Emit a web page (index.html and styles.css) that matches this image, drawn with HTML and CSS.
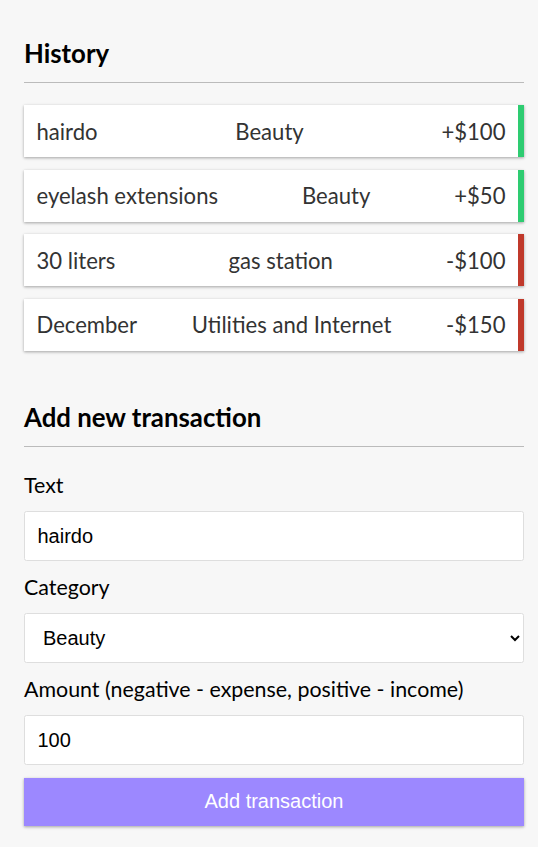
FILE: index.html
```html
<!DOCTYPE html>
<html lang="en">
<head>
<meta charset="UTF-8">
<title>Expense Tracker</title>
<link rel="stylesheet" href="styles.css">
</head>
<body>
<div class="container">
  <h3 class="heading heading-first">History</h3>
  <ul class="list">
    <li class="item plus"><span>hairdo</span><span>Beauty</span><span>+$100</span></li>
    <li class="item plus"><span>eyelash extensions</span><span>Beauty</span><span>+$50</span></li>
    <li class="item minus"><span>30 liters</span><span>gas station</span><span>-$100</span></li>
    <li class="item minus"><span>December</span><span>Utilities and Internet</span><span>-$150</span></li>
  </ul>
  <h3 class="heading">Add new transaction</h3>
  <form class="form">
    <div class="field">
      <label class="label" for="text">Text</label>
      <input class="control" type="text" id="text" value="hairdo">
    </div>
    <div class="field">
      <label class="label" for="category">Category</label>
      <select class="control select" id="category">
        <option selected>Beauty</option>
        <option>gas station</option>
        <option>Utilities and Internet</option>
      </select>
    </div>
    <div class="field">
      <label class="label" for="amount">Amount (negative - expense, positive - income)</label>
      <input class="control" type="number" id="amount" value="100">
    </div>
    <button class="btn" type="button">Add transaction</button>
  </form>
</div>
</body>
</html>
```
FILE: styles.css
```css
* { box-sizing: border-box; }

body {
  margin: 0;
  background-color: #f7f7f7;
  font-family: Lato, "Liberation Sans", sans-serif;
  font-size: 22.5px;
  line-height: 27px;
  color: #000;
}

.container {
  width: 500px;
  margin-left: 24px;
  padding-bottom: 10px;
}

.heading {
  font-size: 25.8px;
  line-height: 31.6px;
  font-weight: 700;
  border-bottom: 1px solid #bbb;
  padding-bottom: 12.5px;
  margin: 50px 0 12.5px;
}

.heading-first { margin-top: 37.5px; }

.list {
  list-style-type: none;
  padding: 0;
  margin: 22.5px 0 51px;
}

.item {
  background-color: #fff;
  box-shadow: 0 1.25px 3.75px rgba(0,0,0,0.12), 0 1.25px 2.5px rgba(0,0,0,0.24);
  color: #333;
  font-size: 22.1px;
  display: flex;
  justify-content: space-between;
  padding: 12.5px;
  margin: 12.5px 0;
}

.item.plus { border-right: 6.25px solid #2ecc71; }
.item.minus { border-right: 6.25px solid #c0392b; }

.label {
  display: inline-block;
  font-size: 21.4px;
  margin: 12.5px 0;
}

.control {
  border: 1px solid #dedede;
  border-radius: 2.5px;
  display: block;
  font-family: "Liberation Sans", Arial, sans-serif;
  font-size: 20px;
  line-height: normal;
  padding: 12.5px;
  width: 100%;
  background: #fff;
  color: #000;
}

.select { height: 50px; padding: 0 12.5px 0 14px; }

.btn {
  background-color: #9c88ff;
  box-shadow: 0 1.25px 3.75px rgba(0,0,0,0.12), 0 1.25px 2.5px rgba(0,0,0,0.24);
  color: #fff;
  border: 0;
  display: block;
  font-family: "Liberation Sans", Arial, sans-serif;
  font-size: 20px;
  line-height: normal;
  margin: 12.5px 0 37.5px;
  padding: 12.5px;
  width: 100%;
}
```
